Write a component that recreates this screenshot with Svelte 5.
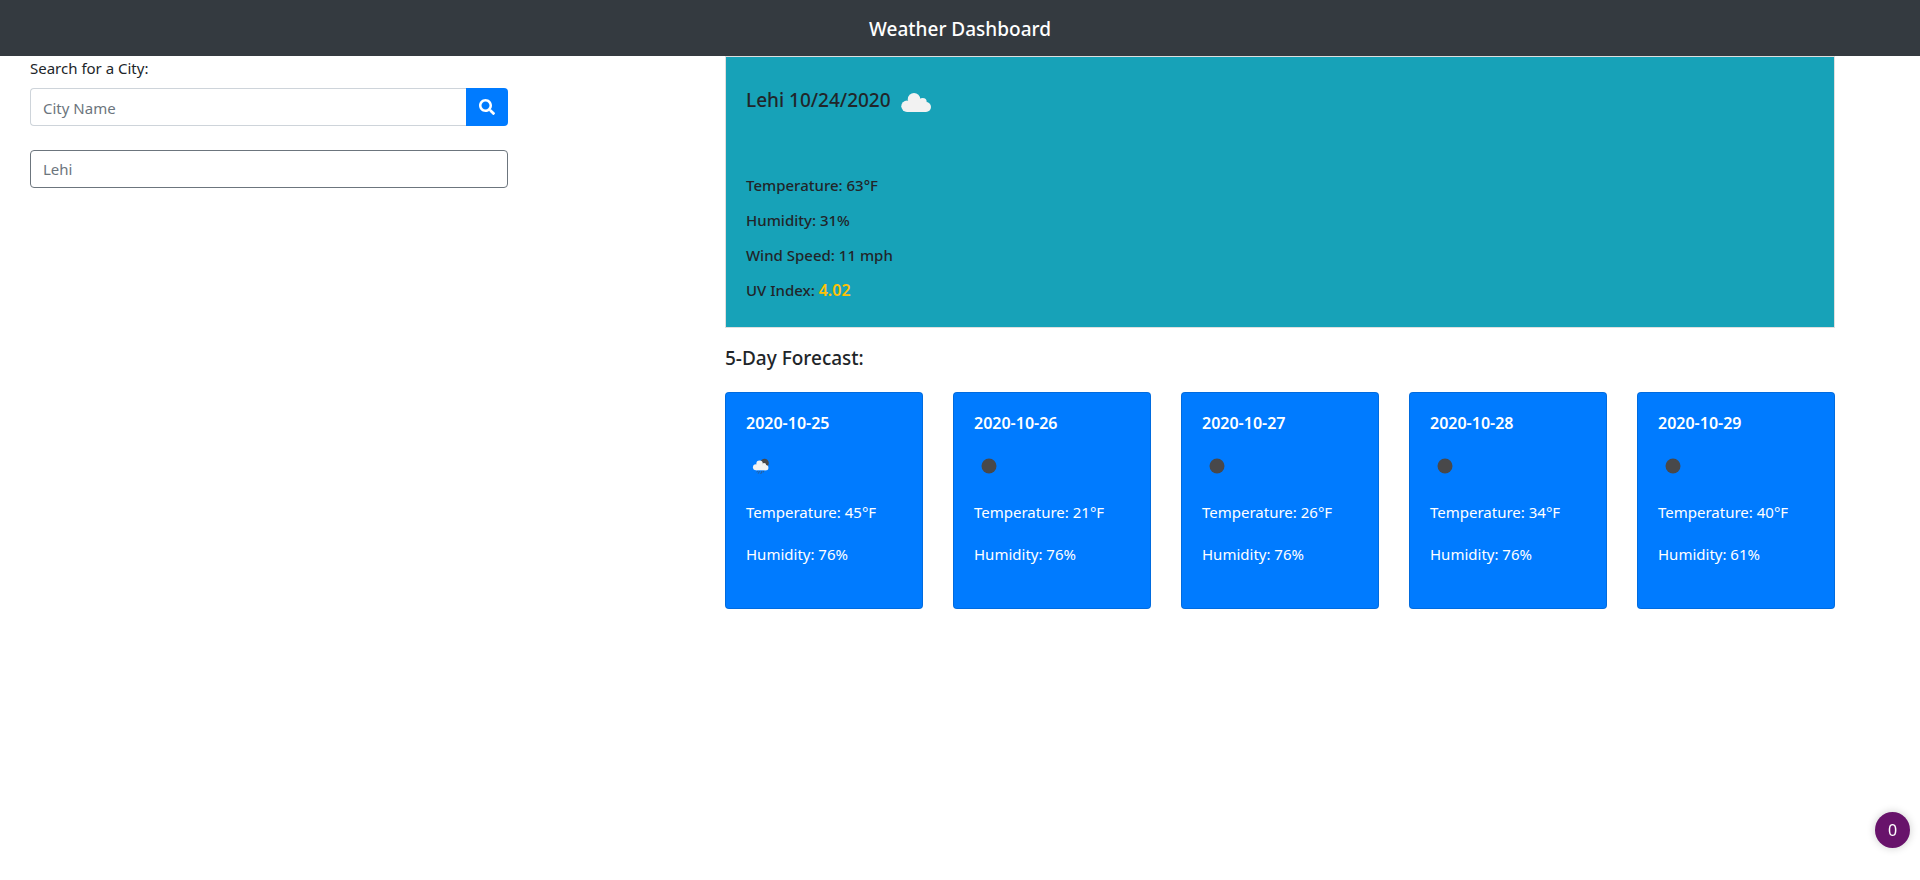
<script>
  let city = $state('');
  const conditions = ['Temperature: 63°F', 'Humidity: 31%', 'Wind Speed: 11 mph'];
  const forecast = [
    { date: '2020-10-25', icon: 'rain', temp: 45, humidity: 76 },
    { date: '2020-10-26', icon: 'clear', temp: 21, humidity: 76 },
    { date: '2020-10-27', icon: 'clear', temp: 26, humidity: 76 },
    { date: '2020-10-28', icon: 'clear', temp: 34, humidity: 76 },
    { date: '2020-10-29', icon: 'clear', temp: 40, humidity: 61 }
  ];
</script>

{#snippet cloud()}
  <g fill="#f2f2f2">
    <circle cx="23" cy="22.200" r="6.200" />
    <circle cx="31.700" cy="25" r="4" />
    <circle cx="16" cy="29.300" r="5.700" />
    <circle cx="35" cy="30" r="5" />
    <path d="M16 25h19v10H16z" />
  </g>
{/snippet}

<header>
  <h1>Weather Dashboard</h1>
</header>

<main>
  <aside>
    <form onsubmit={(e) => e.preventDefault()}>
      <label for="city">Search for a City:</label>
      <div class="group">
        <input id="city" type="text" placeholder="City Name" bind:value={city} />
        <button class="search" type="submit" aria-label="Search">
          <svg width="16" height="16" viewBox="0 0 512 512" fill="currentColor" aria-hidden="true">
            <path d="M505 442.700L405.300 343c-4.500-4.500-10.600-7-17-7H372c27.600-35.300 44-79.700 44-128C416 93.100 322.900 0 208 0S0 93.100 0 208s93.100 208 208 208c48.300 0 92.700-16.400 128-44v16.300c0 6.400 2.500 12.500 7 17l99.700 99.700c9.400 9.400 24.600 9.400 33.900 0l28.300-28.300c9.400-9.400 9.400-24.600.1-34zM208 336c-70.700 0-128-57.200-128-128 0-70.700 57.200-128 128-128 70.700 0 128 57.200 128 128 0 70.700-57.200 128-128 128z" />
          </svg>
        </button>
      </div>
    </form>
    <button class="history" type="button">Lehi</button>
  </aside>

  <div class="results">
    <section class="current">
      <h2>
        Lehi 10/24/2020
        <svg width="50" height="50" viewBox="0 0 50 50" aria-hidden="true">
          {@render cloud()}
        </svg>
      </h2>
      <div class="conditions">
        {#each conditions as line}
          <p>{line}</p>
        {/each}
        <p>UV Index: <strong>4.02</strong></p>
      </div>
    </section>

    <h2 class="heading">5-Day Forecast:</h2>

    <div class="days">
      {#each forecast as day}
        <article>
          <h3>{day.date}</h3>
          <svg width="26" height="26" viewBox="0 0 26 26" aria-hidden="true">
            {#if day.icon === 'rain'}
              <circle cx="18.500" cy="10" r="4.300" fill="#48484a" />
              <g transform="translate(1.600 -.9) scale(.52)">{@render cloud()}</g>
              <path d="M11.500 18l-.7 1.300M13.500 18l-1.300 2.700M16 18l-1.300 3M17.800 18l-.7 1.500" fill="none" stroke="#48484a" stroke-opacity=".75" stroke-width=".8" />
            {:else}
              <circle cx="15" cy="13" r="7.500" fill="#48484a" />
            {/if}
          </svg>
          <div class="figures">
            <p>Temperature: {day.temp}°F</p>
            <p>Humidity: {day.humidity}%</p>
          </div>
        </article>
      {/each}
    </div>
  </div>
</main>

<button class="counter" type="button">0</button>

<style>
  :global(body) {
    margin: 0;
    background: #fff;
    color: #212529;
    font: 400 15px/24px "Noto Sans", "Open Sans", sans-serif;
  }
  :global(*) {
    box-sizing: border-box;
  }
  h1, h2, h3, p {
    margin: 0;
  }
  header {
    display: flex;
    justify-content: center;
    align-items: center;
    padding: 17px 16px 15px;
    background: #343a40;
    color: #fff;
  }
  h1 {
    font-size: 19px;
    line-height: 24px;
    font-weight: 500;
  }
  main {
    display: grid;
    grid-template-columns: 1fr 2fr;
  }
  aside {
    width: 83%;
    padding-left: 30px;
    padding-right: 23px;
  }
  label {
    display: block;
    margin-bottom: 8px;
  }
  .group {
    display: flex;
    margin-bottom: 24px;
  }
  input,
  .history {
    height: 38px;
    padding: 0 12px;
    border: 1px solid #ced4da;
    border-radius: 4px;
    background: #fff;
    color: #6c757d;
    font: inherit;
    text-align: left;
  }
  input {
    flex: 1;
    min-width: 0;
    padding-top: 2px;
    border-right: 0;
    border-radius: 4px 0 0 4px;
  }
  input::placeholder {
    color: #6c757d;
    opacity: 1;
  }
  .search {
    display: flex;
    align-items: center;
    justify-content: center;
    width: 42px;
    height: 38px;
    padding: 0;
    border: 0;
    border-radius: 0 4px 4px 0;
    background: #007bff;
    color: #fff;
  }
  .history {
    display: block;
    width: 100%;
    border-color: #6c757d;
  }
  .results {
    width: 100%;
    max-width: 1140px;
    margin: 0 auto;
    padding: 0 15px;
  }
  .current {
    padding: 20px 20px 27px;
    border: 1px solid rgba(0, 0, 0, 0.125);
    background: #17a2b8;
    background-clip: padding-box;
  }
  h2 {
    display: flex;
    align-items: center;
    font-size: 19px;
    line-height: 24px;
    font-weight: 500;
  }
  .current h2 {
    align-items: flex-start;
    line-height: 46px;
  }
  .conditions {
    display: grid;
    gap: 16px;
    margin-top: 49px;
    font-weight: 500;
  }
  .conditions p {
    line-height: 19px;
  }
  strong {
    color: #ffc107;
    font-size: 16px;
    font-weight: 600;
  }
  .heading {
    margin: 18px 0 22px;
  }
  .days {
    display: grid;
    grid-template-columns: repeat(5, 1fr);
    gap: 30px;
  }
  article {
    display: flex;
    flex-direction: column;
    padding: 18px 20px 42px;
    border: 1px solid rgba(0, 0, 0, 0.125);
    border-radius: 4px;
    background: #007bff;
    color: #fff;
  }
  h3 {
    margin-bottom: 18px;
    font-size: 16px;
    line-height: 24px;
    font-weight: 600;
  }
  .figures {
    display: grid;
    gap: 18px;
    margin-top: 21px;
  }
  .counter {
    position: fixed;
    right: 10px;
    bottom: 32px;
    width: 35px;
    height: 36px;
    padding: 0;
    border: 0;
    border-radius: 50%;
    background: #68136b;
    box-shadow: 0 0 8px rgba(0, 0, 0, 0.2);
    color: #fff;
    font: 400 16px/36px "Noto Sans", sans-serif;
  }
</style>
